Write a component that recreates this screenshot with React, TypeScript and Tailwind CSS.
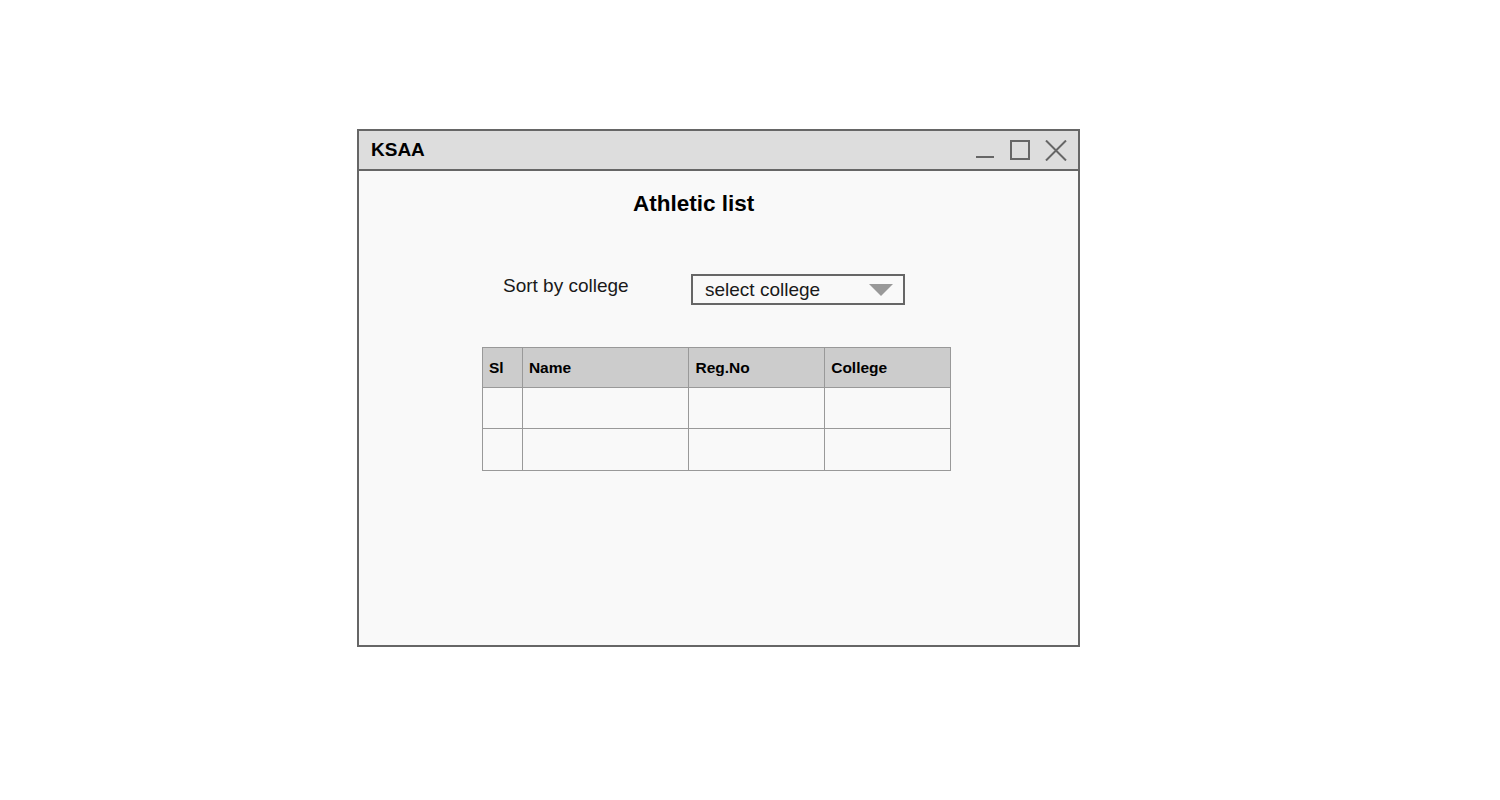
export default function App() {
  const cols = ["Sl", "Name", "Reg.No", "College"];
  const widths = ["w-[40px]", "w-[167px]", "w-[136px]", "w-[126px]"];

  return (
    <div className="h-[800px] w-[1500px] bg-white pl-[357px] pt-[129px] font-['Liberation_Sans',Arial,sans-serif]">
      {/* Window frame */}
      <div className="flex h-[518px] w-[723px] flex-col border-2 border-[#666666] bg-[#f9f9f9]">
        {/* Title bar */}
        <div className="flex h-[40px] shrink-0 items-center justify-between border-b-2 border-[#666666] bg-[#dddddd] pl-[12px] pr-[11px]">
          <span className="text-[19px] font-bold text-black">KSAA</span>
          <div className="flex items-center">
            <svg width="18" height="20" viewBox="0 0 18 20" className="mr-[16px]">
              <rect x="0" y="16" width="18" height="2" fill="#666666" />
            </svg>
            <svg width="21" height="21" viewBox="0 0 21 21" className="mr-[14px]">
              <rect x="1" y="1" width="18" height="18" fill="none" stroke="#666666" strokeWidth="2" />
            </svg>
            <svg width="22" height="21" viewBox="0 0 22 21">
              <path d="M1 0.5 L21 20.5 M21 0.5 L1 20.5" stroke="#666666" strokeWidth="2" fill="none" />
            </svg>
          </div>
        </div>

        {/* Body */}
        <div className="flex flex-col pl-[123px]">
          <h1 className="mt-[19px] pl-[151px] text-[22.5px] font-bold leading-[28px] text-black">Athletic list</h1>

          <div className="mt-[56px] flex items-center">
            <span className="mb-[8px] ml-[21px] w-[188px] text-[19px] leading-[22px] text-[#1a1a1a]">Sort by college</span>
            <div className="flex h-[31px] w-[214px] items-center justify-between border-2 border-[#666666] bg-[#f9f9f9] pl-[12px] pr-[10px]">
              <span className="pt-[1px] text-[19px] leading-[22px] text-[#1a1a1a]">select college</span>
              <svg width="24" height="12" viewBox="0 0 24 12">
                <path d="M0 0 L24 0 L12 12 Z" fill="#999999" />
              </svg>
            </div>
          </div>

          <table className="mt-[42px] w-[469px] border-collapse text-left">
            <thead>
              <tr className="h-[40px] bg-[#cccccc]">
                {cols.map((c, i) => (
                  <th key={c} className={`${widths[i]} border border-[#999999] pl-[6px] text-[15.5px] font-bold text-black`}>
                    {c}
                  </th>
                ))}
              </tr>
            </thead>
            <tbody>
              {[41, 42].map((h) => (
                <tr key={h} className={h === 41 ? "h-[41px]" : "h-[42px]"}>
                  {cols.map((c) => (
                    <td key={c} className="border border-[#999999]" />
                  ))}
                </tr>
              ))}
            </tbody>
          </table>
        </div>
      </div>
    </div>
  );
}
